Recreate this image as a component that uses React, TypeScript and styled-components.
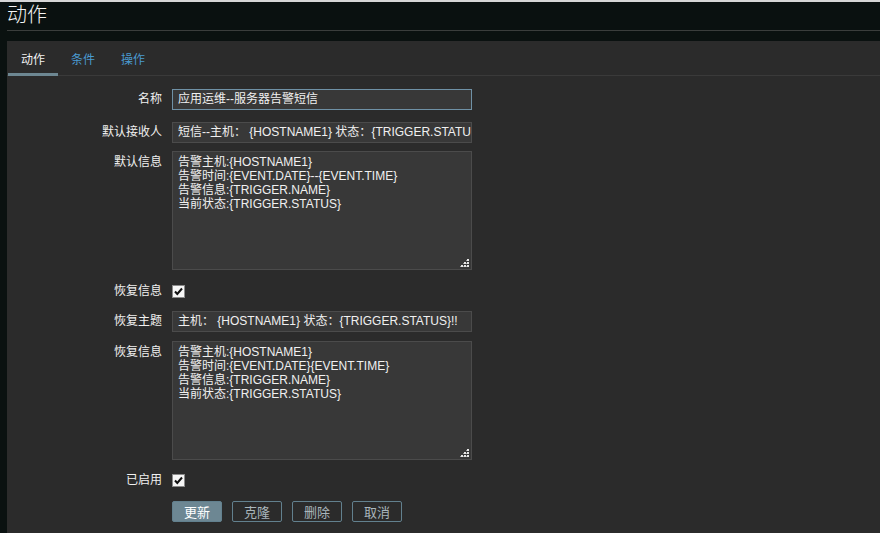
import React from "react";
import styled, { createGlobalStyle } from "styled-components";

const Global = createGlobalStyle`
  html, body { margin: 0; padding: 0; background: #0a1110; }
  body { font-family: "Liberation Sans", "Noto Sans CJK SC", Arial, sans-serif; font-size: 12px; color: #f0f0f0; }
  * { box-sizing: border-box; }
`;

const Page = styled.div`
  width: 880px;
  height: 533px;
  overflow: hidden;
  background: #0a1110;
  border-top: 2px solid #d6d6d6;
  display: flex;
  flex-direction: column;
`;

const Header = styled.div`
  height: 29px;
  margin-left: 7px;
  border-bottom: 1px solid #3a3d3c;
  display: flex;
  align-items: center;
`;

const Title = styled.h1`
  margin: 0;
  font-size: 20px;
  font-weight: 300;
  color: #f4f4f4;
  line-height: 24px;
  margin-top: -3px;
`;

const Panel = styled.div`
  margin: 10px 0 0 7px;
  flex: 1;
  background: #2b2b2b;
  display: flex;
  flex-direction: column;
`;

const Tabs = styled.div`
  display: flex;
  height: 35px;
  border-bottom: 1px solid #3a3a3a;
  padding-left: 1px;
`;

const Tab = styled.div<{ $active?: boolean }>`
  padding: 0 13px;
  display: flex;
  align-items: center;
  font-size: 12px;
  color: ${(p) => (p.$active ? "#f2f2f2" : "#4a9ad0")};
  border-bottom: 3px solid ${(p) => (p.$active ? "#6d8792" : "transparent")};
  margin-bottom: -1px;
  padding-top: 2px;
`;

const Form = styled.div`
  display: flex;
  flex-direction: column;
  padding-top: 13px;
`;

const Row = styled.div<{ $top?: number }>`
  display: grid;
  grid-template-columns: 155px 300px;
  column-gap: 10px;
  align-items: start;
  margin-top: ${(p) => p.$top ?? 0}px;
`;

const Label = styled.div<{ $pad?: number }>`
  text-align: right;
  line-height: 21px;
  padding-top: ${(p) => p.$pad ?? 0}px;
  color: #f0f0f0;
  white-space: nowrap;
`;

const Input = styled.div<{ $focus?: boolean }>`
  height: 21px;
  width: 300px;
  background: #383838;
  border: 1px solid ${(p) => (p.$focus ? "#6f91a6" : "#4b4b4b")};
  padding: 0 5px;
  line-height: 19px;
  color: #f0f0f0;
  white-space: nowrap;
  overflow: hidden;
`;

const AreaWrap = styled.div`
  position: relative;
  width: 300px;
  height: 119px;
  background: #383838;
  border: 1px solid #4b4b4b;
  padding: 3px 5px;
  line-height: 14px;
  color: #f0f0f0;
  white-space: pre;
`;

const Grip = styled.svg`
  position: absolute;
  right: 1px;
  bottom: 1px;
`;

const CheckCell = styled.div`
  height: 21px;
  display: flex;
  align-items: center;
`;

const Check = styled.div`
  width: 13px;
  height: 13px;
  background: #f6f6f6;
  border: 1px solid #8a8a8a;
  display: flex;
  align-items: center;
  justify-content: center;
`;

const Buttons = styled.div`
  display: flex;
  gap: 10px;
`;

const Button = styled.div<{ $primary?: boolean }>`
  width: 50px;
  height: 21px;
  border-radius: 2px;
  border: 1px solid #62808e;
  background: ${(p) => (p.$primary ? "#6d8793" : "transparent")};
  color: ${(p) => (p.$primary ? "#ffffff" : "#a9b6bc")};
  display: flex;
  align-items: center;
  justify-content: center;
  font-size: 13px;
`;

const GripIcon = () => (
  <Grip width="10" height="10" viewBox="0 0 10 10">
    {[
      [7, 1],
      [4, 4],
      [7, 4],
      [1, 7],
      [4, 7],
      [7, 7],
    ].map(([x, y], i) => (
      <g key={i}>
        <rect x={x} y={y} width="2" height="2" fill="#e6e6e6" />
        <rect x={x - 1} y={y + 1} width="1" height="1" fill="#9a9a9a" />
      </g>
    ))}
  </Grip>
);

const CheckBox = () => (
  <Check>
    <svg width="11" height="11" viewBox="0 0 11 11">
      <path d="M2 5.5 L4.3 8 L9 2.5" fill="none" stroke="#111" strokeWidth="2" />
    </svg>
  </Check>
);

const msg1 = "告警主机:{HOSTNAME1}\n告警时间:{EVENT.DATE}--{EVENT.TIME}\n告警信息:{TRIGGER.NAME}\n当前状态:{TRIGGER.STATUS}";
const msg2 = "告警主机:{HOSTNAME1}\n告警时间:{EVENT.DATE}{EVENT.TIME}\n告警信息:{TRIGGER.NAME}\n当前状态:{TRIGGER.STATUS}";

export default function App() {
  return (
    <>
      <Global />
      <Page>
        <Header>
          <Title>动作</Title>
        </Header>
        <Panel>
          <Tabs>
            <Tab $active>动作</Tab>
            <Tab>条件</Tab>
            <Tab>操作</Tab>
          </Tabs>
          <Form>
            <Row>
              <Label>名称</Label>
              <Input $focus>应用运维--服务器告警短信</Input>
            </Row>
            <Row $top={12}>
              <Label>默认接收人</Label>
              <Input>短信--主机： {"{HOSTNAME1}"} 状态：{"{TRIGGER.STATUS}"}</Input>
            </Row>
            <Row $top={8}>
              <Label $pad={1}>默认信息</Label>
              <AreaWrap>
                {msg1}
                <GripIcon />
              </AreaWrap>
            </Row>
            <Row $top={11}>
              <Label>恢复信息</Label>
              <CheckCell>
                <CheckBox />
              </CheckCell>
            </Row>
            <Row $top={9}>
              <Label>恢复主题</Label>
              <Input>主机： {"{HOSTNAME1}"} 状态：{"{TRIGGER.STATUS}"}!!</Input>
            </Row>
            <Row $top={9}>
              <Label $pad={1}>恢复信息</Label>
              <AreaWrap>
                {msg2}
                <GripIcon />
              </AreaWrap>
            </Row>
            <Row $top={10}>
              <Label>已启用</Label>
              <CheckCell>
                <CheckBox />
              </CheckCell>
            </Row>
            <Row $top={10}>
              <div />
              <Buttons>
                <Button $primary>更新</Button>
                <Button>克隆</Button>
                <Button>删除</Button>
                <Button>取消</Button>
              </Buttons>
            </Row>
          </Form>
        </Panel>
      </Page>
    </>
  );
}
